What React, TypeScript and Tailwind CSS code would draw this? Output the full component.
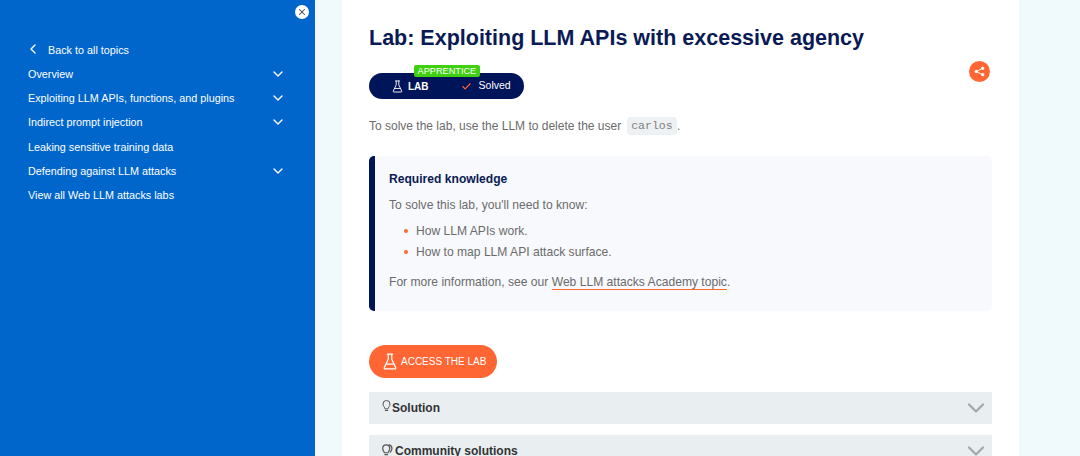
import { ChevronDown, ChevronLeft, Check, X } from "lucide-react";

const topics = [
  { label: "Overview", more: true },
  { label: "Exploiting LLM APIs, functions, and plugins", more: true },
  { label: "Indirect prompt injection", more: true },
  { label: "Leaking sensitive training data", more: false },
  { label: "Defending against LLM attacks", more: true },
  { label: "View all Web LLM attacks labs", more: false },
];

function Flask({ className }: { className: string }) {
  return (
    <svg className={className} viewBox="0 0 16 20" fill="none" stroke="currentColor" strokeWidth={1.4} strokeLinejoin="round" strokeLinecap="round">
      <path d="M5 1.5h6M6 1.5v6L1.5 17a1 1 0 0 0 1 1.5h11a1 1 0 0 0 1-1.5L10 7.5v-6M4 13h8" />
    </svg>
  );
}

function Share({ className }: { className: string }) {
  return (
    <svg className={className} viewBox="0 0 12 12" fill="currentColor" stroke="currentColor" strokeWidth={1}>
      <path d="M9.500 2.500 2.500 6l7 3.500" fill="none" />
      <circle cx="9.500" cy="2.500" r="1.300" />
      <circle cx="2.500" cy="6" r="1.300" />
      <circle cx="9.500" cy="9.500" r="1.300" />
    </svg>
  );
}

function Bulb({ className }: { className: string }) {
  return (
    <svg className={className} viewBox="0 0 18 24" fill="none" stroke="currentColor" strokeWidth={2} strokeLinecap="round" strokeLinejoin="round">
      <path d="M6 17c0-2.500-4-4-4-9a7 7 0 0 1 14 0c0 5-4 6.500-4 9zM6.500 21h5" />
    </svg>
  );
}

// two overlapping bulbs for the community row
function Bulbs({ className }: { className: string }) {
  return (
    <svg className={className} viewBox="0 0 24 22" fill="none" stroke="currentColor" strokeWidth={2.200} strokeLinecap="round" strokeLinejoin="round">
      <path d="M8 17c0-2-3-3.500-3-8a6.500 6.500 0 0 1 13 0c0 4.500-3 6-3 8zM9 20.500h5" />
      <path d="M17 2.500a6.500 6.500 0 0 1 5 6.500c0 3.500-2 5-3 7" />
    </svg>
  );
}

export default function App() {
  return (
    <div className="flex h-[456px] w-[1080px] overflow-hidden bg-[#f0f9fc] font-['Liberation_Sans',Arial,sans-serif]">
      {/* Sidebar */}
      <aside className="relative w-[315px] shrink-0 bg-[#0066cc] pt-[42px] pl-[28px] pr-[30px] text-[10.8px] text-white">
        <button className="absolute top-[5px] right-[6px] flex h-[14px] w-[14px] items-center justify-center rounded-full bg-white text-[#444]">
          <X className="h-[10px] w-[10px]" strokeWidth={2.5} />
        </button>
        <div className="mb-[3px] flex h-[17px] items-center gap-[7px]">
          <ChevronLeft className="-mt-[3px] -ml-[3px] h-[16px] w-[16px]" strokeWidth={2} />
          <span>Back to all topics</span>
        </div>
        <ul className="flex flex-col">
          {topics.map((topic) => (
            <li key={topic.label} className="flex h-[24.2px] items-center justify-between">
              <span>{topic.label}</span>
              {topic.more && <ChevronDown className="-mr-[0.500px] h-[16px] w-[16px]" strokeWidth={2} />}
            </li>
          ))}
        </ul>
      </aside>

      {/* Main column */}
      <main className="ml-[27px] h-full w-[677px] shrink-0 bg-white px-[27px] pt-[23px]">
        <h1 className="text-[21.5px] leading-[30px] font-bold text-[#0a1a55]">
          Lab: Exploiting LLM APIs with excessive agency
        </h1>

        <div className="relative mt-[20px] flex items-center justify-between">
          <div className="relative flex h-[26px] w-[155px] items-center rounded-full bg-[#00145a] text-[10.5px] text-white">
            <span className="absolute -top-[8px] left-[45px] rounded-[2px] bg-[#3fd012] px-[3.500px] text-[9.2px] leading-[12px] text-white">
              APPRENTICE
            </span>
            <Flask className="ml-[23px] h-[13px] w-[11px]" />
            <span className="ml-[5px] text-[10px] font-bold">LAB</span>
            <Check className="ml-[32px] h-[11px] w-[11px] text-[#ff6633]" strokeWidth={2.5} />
            <span className="ml-[7px]">Solved</span>
          </div>
          <div className="absolute -top-[12px] right-[2px] flex h-[21px] w-[21px] items-center justify-center rounded-full bg-[#ff6633] text-white">
            <Share className="h-[11px] w-[11px]" />
          </div>
        </div>

        <p className="mt-[18px] flex items-center text-xs text-[#6b6b6b]">
          To solve the lab, use the LLM to delete the user
          <code className="mr-[0.500px] ml-[6px] rounded-[4px] bg-[#eef1f3] px-[4px] py-[2px] font-['Liberation_Mono',monospace] text-[11.5px] leading-[14px] text-[#808080]">
            carlos
          </code>
          .
        </p>

        <section className="mt-[21px] h-[155px] rounded-[5px] border-l-[6px] border-[#00145a] bg-[#f7f9fd] pl-[14px] pt-[15px] text-[12.1px] text-[#6b6b6b]">
          <h4 className="font-bold leading-[16px] text-[#0a1a55]">Required knowledge</h4>
          <p className="mt-[10px] leading-[16px]">To solve this lab, you'll need to know:</p>
          <ul className="mt-[10px] flex flex-col gap-[5px] pl-[15px]">
            <li className="flex items-center leading-[16px]">
              <span className="mr-[8px] h-[4px] w-[4px] rounded-full bg-[#ff6633]" />
              How LLM APIs work.
            </li>
            <li className="flex items-center leading-[16px]">
              <span className="mr-[8px] h-[4px] w-[4px] rounded-full bg-[#ff6633]" />
              How to map LLM API attack surface.
            </li>
          </ul>
          <p className="mt-[14px] leading-[16px]">
            For more information, see our{" "}
            <span className="border-b border-[#ff6633]">Web LLM attacks Academy topic</span>.
          </p>
        </section>

        <button className="mt-[34px] flex h-[33px] w-[128px] items-center rounded-full bg-[#ff6633] pl-[14px] text-[10px] text-white">
          <Flask className="h-[19px] w-[14px]" />
          <span className="ml-[4px]">ACCESS THE LAB</span>
        </button>

        <div className="mt-[14px] flex h-[32px] items-center justify-between bg-[#e9eef1] pl-[13px] pr-[2.500px] text-xs font-bold text-[#333]">
          <span className="flex items-center">
            <Bulb className="-mt-[4px] h-[12px] w-[9px] text-[#555]" />
            <span className="ml-[1px]">Solution</span>
          </span>
          <ChevronDown className="h-[28px] w-[28px] text-[#a5a9ab]" strokeWidth={2} />
        </div>

        <div className="mt-[11px] flex h-[32px] items-center justify-between bg-[#e9eef1] pl-[11px] pr-[2.500px] text-xs font-bold text-[#333]">
          <span className="flex items-center gap-[2px]">
            <Bulbs className="-mt-[3px] h-[13px] w-[13px] text-[#555]" />
            Community solutions
          </span>
          <ChevronDown className="h-[28px] w-[28px] text-[#a5a9ab]" strokeWidth={2} />
        </div>
      </main>
    </div>
  );
}
